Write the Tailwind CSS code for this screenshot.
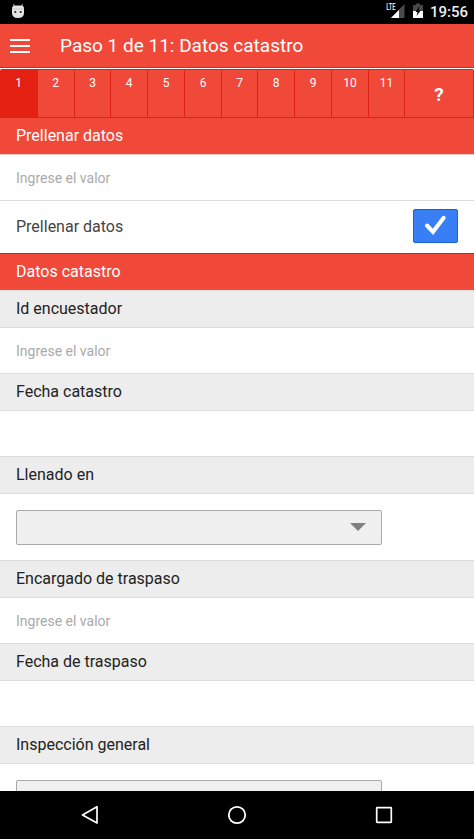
<!DOCTYPE html>
<html lang="es">
<head>
<meta charset="utf-8">
<title>Paso 1 de 11: Datos catastro</title>
<script src="https://cdn.jsdelivr.net/npm/@tailwindcss/browser@4"></script>
</head>
<body class="bg-white">
<div class="w-[474px] h-[839px] overflow-hidden flex flex-col bg-white font-[Roboto,sans-serif] text-[16px] text-[#222]">
  <!-- Status bar -->
  <div class="h-6 shrink-0 bg-black flex items-center text-white">
    <svg class="ml-[11px] w-[14px] h-6" viewBox="0 0 14 24">
      <path d="M3.4 6.5L2.4 4M10.6 6.5L11.6 4" stroke="#aaa" stroke-width="1" fill="none"/>
      <path d="M1 8.5Q1 5.5 4 5.5H10Q13 5.5 13 8.5V13Q13 18 7 18Q1 18 1 13Z" fill="#e4e4e4"/>
      <path d="M1 9H13" stroke="#bbb" stroke-width=".6"/>
      <circle cx="4.3" cy="12" r="1.1" fill="#222"/><circle cx="9.7" cy="12" r="1.1" fill="#222"/>
    </svg>
    <svg class="ml-[361px] w-[40px] h-6" viewBox="0 0 40 24">
      <path d="M18.5 4V18H4.5Z" fill="#4b4b4b"/>
      <path d="M13 10V18H5Z" fill="#fff"/>
      <path d="M0 3H10.5V11H0Z" fill="#000"/>
      <g transform="translate(0.3 10.3) scale(0.64 1)"><text font-size="9" font-weight="700" fill="#ddd">LTE</text></g>
      <path d="M27 5H30V3.5H34V5H37V18H27Z" fill="#484848"/>
      <path d="M27 11H37V18H27Z" fill="#fff"/>
      <path d="M33.5 6L29.5 12H31.5L30.5 16L34.7 10.5H32.5Z" fill="#000"/>
    </svg>
    <span class="ml-[4px] text-[15px] leading-6 font-medium text-[#eee]">19:56</span>
  </div>
  <!-- Title bar -->
  <div class="h-11 shrink-0 bg-[#f04839] border-b border-[#e42112] flex items-center text-white">
    <div class="ml-[10px] mt-px w-5 flex flex-col gap-1">
      <i class="h-[2px] bg-white"></i><i class="h-[2px] bg-white"></i><i class="h-[2px] bg-white"></i>
    </div>
    <h1 class="ml-[30px] text-[19px] leading-[43px]">Paso 1 de 11: Datos catastro</h1>
  </div>
  <!-- Steps -->
  <div class="h-[50px] shrink-0 bg-white pt-px">
    <div class="h-[49px] grid grid-cols-[38px_37px_36px_37px_37px_37px_36px_37px_37px_37px_36px_69px] rounded-t-[2px] overflow-hidden bg-[#f04839] border-y border-[#dc2416] text-white text-[12px] leading-[14px] text-center *:border-r *:border-[#dc2416]">
      <div class="pt-[6px] bg-[#e42112]">1</div><div class="pt-[6px] pr-px">2</div><div class="pt-[6px]">3</div><div class="pt-[6px]">4</div><div class="pt-[6px]">5</div><div class="pt-[6px]">6</div><div class="pt-[6px]">7</div><div class="pt-[6px]">8</div><div class="pt-[6px]">9</div><div class="pt-[6px]">10</div><div class="pt-[6px]">11</div>
      <div class="flex items-center justify-center pt-[2px] text-[19px] font-bold">?</div>
    </div>
  </div>
  <!-- Form -->
  <div class="flex-1 min-h-0 overflow-hidden">
    <div class="h-[37px] px-4 bg-[#f04839] border-b border-[#f5c9c5] text-white leading-[35px]">Prellenar datos</div>
    <div class="h-[46px] px-4 border-b border-[#ddd] text-[14px] leading-[46px] text-[#aaa]">Ingrese el valor</div>
    <div class="h-[52px] px-4 flex items-center justify-between text-[#444]">
      <span>Prellenar datos</span>
      <div class="relative -top-px w-[45px] h-[34px] rounded-[2px] bg-[#387ef5] border border-[#1763cf]">
        <svg class="w-[43px] h-8" viewBox="0 0 43 32"><path d="M13 15.5L19 21.8L29.7 7.8" fill="none" stroke="#fff" stroke-width="4" stroke-linecap="round"/></svg>
      </div>
    </div>
    <div class="h-[37px] px-4 bg-[#f04839] border-t border-[#b22d22] text-white leading-[35px]">Datos catastro</div>
    <div class="h-[38px] px-4 bg-[#ededed] border-y border-[#ddd] leading-[36px]">Id encuestador</div>
    <div class="h-[45px] px-4 text-[14px] leading-[46px] text-[#aaa]">Ingrese el valor</div>
    <div class="h-[38px] px-4 bg-[#ededed] border-y border-[#ddd] leading-[36px]">Fecha catastro</div>
    <div class="h-[45px]"></div>
    <div class="h-[38px] px-4 bg-[#ededed] border-y border-[#ddd] leading-[36px]">Llenado en</div>
    <div class="h-[66px] px-4 pt-4">
      <div class="w-[366px] h-[35px] rounded-[2px] bg-[#f0f0f0] border border-[#a9a9a9] flex justify-end pr-[15px] pt-[12px]">
        <svg class="w-4 h-2" viewBox="0 0 16 8"><path d="M0 0H16L8 8Z" fill="#808080"/></svg>
      </div>
    </div>
    <div class="h-[38px] px-4 bg-[#ededed] border-y border-[#ddd] leading-[36px]">Encargado de traspaso</div>
    <div class="h-[45px] px-4 text-[14px] leading-[46px] text-[#aaa]">Ingrese el valor</div>
    <div class="h-[38px] px-4 bg-[#ededed] border-y border-[#ddd] leading-[36px]">Fecha de traspaso</div>
    <div class="h-[45px]"></div>
    <div class="h-[38px] px-4 bg-[#ededed] border-y border-[#ddd] leading-[36px]">Inspección general</div>
    <div class="h-[66px] px-4 pt-4">
      <div class="w-[366px] h-[35px] rounded-[2px] bg-[#f0f0f0] border border-[#a9a9a9]"></div>
    </div>
  </div>
  <!-- Navigation bar -->
  <div class="h-12 shrink-0 bg-black flex items-center justify-center gap-[127px]">
    <svg class="w-5 h-5" viewBox="0 0 20 20"><path d="M17 1.7V18L2.5 9.9Z" fill="none" stroke="#fff" stroke-width="1.7" stroke-linejoin="round"/></svg>
    <svg class="w-5 h-5" viewBox="0 0 20 20"><circle cx="10" cy="10" r="8.2" fill="none" stroke="#fff" stroke-width="1.8"/></svg>
    <svg class="w-5 h-5" viewBox="0 0 20 20"><rect x="2.7" y="2.7" width="14.6" height="14.6" rx=".5" fill="none" stroke="#fff" stroke-width="1.7"/></svg>
  </div>
</div>
</body>
</html>
